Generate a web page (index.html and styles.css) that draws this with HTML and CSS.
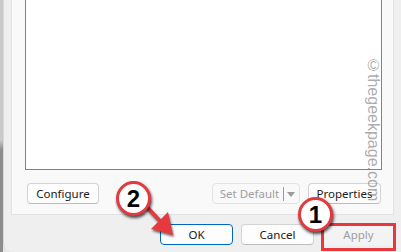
FILE: index.html
```html
<!DOCTYPE html>
<html lang="en">
<head>
  <meta charset="UTF-8">
  <title>Printer Properties</title>
  <link rel="stylesheet" href="styles.css">
</head>
<body>
  <div class="screen">
    <div class="edge"></div>

    <div class="dialog">
      <div class="panel">
        <div class="listbox"></div>
        <div class="tools">
          <button class="btn configure">Configure</button>
          <div class="tools-right">
            <div class="btn split disabled">
              <span class="split-label">Set Default</span>
              <span class="split-sep"></span>
              <span class="split-arrow"></span>
            </div>
            <button class="btn properties">Properties</button>
          </div>
        </div>
      </div>

      <div class="actions">
        <button class="btn primary">OK</button>
        <button class="btn">Cancel</button>
        <button class="btn disabled apply">Apply</button>
      </div>
    </div>

    <!-- annotations drawn on top of the screenshot -->
    <div class="watermark">©thegeekpage.com</div>
    <div class="highlight"></div>
    <svg class="pointer" width="44" height="44" viewBox="0 0 44 44">
      <line x1="6" y1="6" x2="20" y2="21" stroke="#e4393e" stroke-width="4" stroke-linecap="round"/>
      <polygon points="11,29 28,12 33,35" fill="#e4393e"/>
    </svg>
    <div class="badge badge-2">2</div>
    <div class="badge badge-1">1</div>
  </div>
</body>
</html>
```

FILE: styles.css
```css
* {
  box-sizing: border-box;
}

body {
  margin: 0;
  font-family: 'Noto Sans', 'Liberation Sans', sans-serif;
  background-color: #e9e9e9;
}

.screen {
  position: relative;
  display: flex;
  width: 401px;
  height: 252px;
  overflow: hidden;
  background-color: #e9e9e9;
}

.edge {
  width: 3px;
  background: linear-gradient(#c9c9c9 0, #c9c9c9 140px, #8d8d8d 150px, #8d8d8d 100%);
}

.dialog {
  flex: 1;
  background-color: #efefef;
  border-left: 1px solid #d8d8d8;
  border-bottom-left-radius: 8px;
  padding: 0 7px;
}

.panel {
  height: 215px;
  background-color: #f9f9f9;
  border: 1px solid #e2e2e2;
  border-top: none;
  padding: 0 11px 0 13px;
}

.listbox {
  height: 170px;
  background-color: #fff;
  border: 1px solid #838383;
  border-top: none;
}

.tools {
  display: flex;
  justify-content: space-between;
  margin-top: 13px;
  padding: 0 1px 0 2px;
}

.tools-right {
  display: flex;
  gap: 8px;
}

.btn {
  height: 21px;
  width: 73px;
  padding: 0;
  font-family: inherit;
  font-size: 11.5px;
  color: #202020;
  background-color: #fdfdfd;
  border: 1px solid #d3d3d3;
  border-bottom-color: #bdbdbd;
  border-radius: 4px;
}

.btn.configure {
  width: 72px;
}

.btn.disabled {
  color: #a0a0a0;
  background-color: #f9f9f9;
  border-color: #e3e3e3;
}

.btn.primary {
  border: 1px solid #0067c0;
  background-color: #fdfdfd;
}

.split {
  display: flex;
  align-items: center;
  width: 88px;
}

.split-label {
  flex: 1;
  text-align: center;
  padding-left: 3px;
}

.split-sep {
  width: 1px;
  height: 14px;
  background-color: #9a9a9a;
}

.split-arrow {
  width: 0;
  height: 0;
  margin: 1px 4px 0 3px;
  border-left: 4px solid transparent;
  border-right: 4px solid transparent;
  border-top: 5px solid #9a9a9a;
}

.actions {
  display: flex;
  justify-content: flex-end;
  gap: 8px;
  margin-top: 9px;
  margin-right: -1px;
}

.btn.apply {
  background-color: #f3f3f3;
  border-color: #f3f3f3;
}

.watermark {
  position: absolute;
  left: 365px;
  top: 57px;
  writing-mode: vertical-rl;
  font-family: 'Liberation Sans', Arial, sans-serif;
  font-size: 16px;
  line-height: 17px;
  color: rgba(90, 90, 90, 0.5);
}

.highlight {
  position: absolute;
  left: 321px;
  top: 223px;
  width: 75px;
  height: 28px;
  border: 3px solid #e8383d;
}

.pointer {
  position: absolute;
  left: 140px;
  top: 200px;
  filter: drop-shadow(1px 2px 1px rgba(0, 0, 0, 0.55));
}

.badge {
  position: absolute;
  width: 35px;
  height: 35px;
  border-radius: 50%;
  background-color: #fff;
  border: 3px solid #e3393f;
  box-shadow: 1px 2px 3px rgba(0, 0, 0, 0.7);
  font-family: 'Liberation Sans', Arial, sans-serif;
  font-weight: 700;
  font-size: 24px;
  line-height: 29px;
  text-align: center;
  color: #000;
}

.badge-1 {
  left: 298px;
  top: 197px;
}

.badge-2 {
  left: 116px;
  top: 181px;
}
```
